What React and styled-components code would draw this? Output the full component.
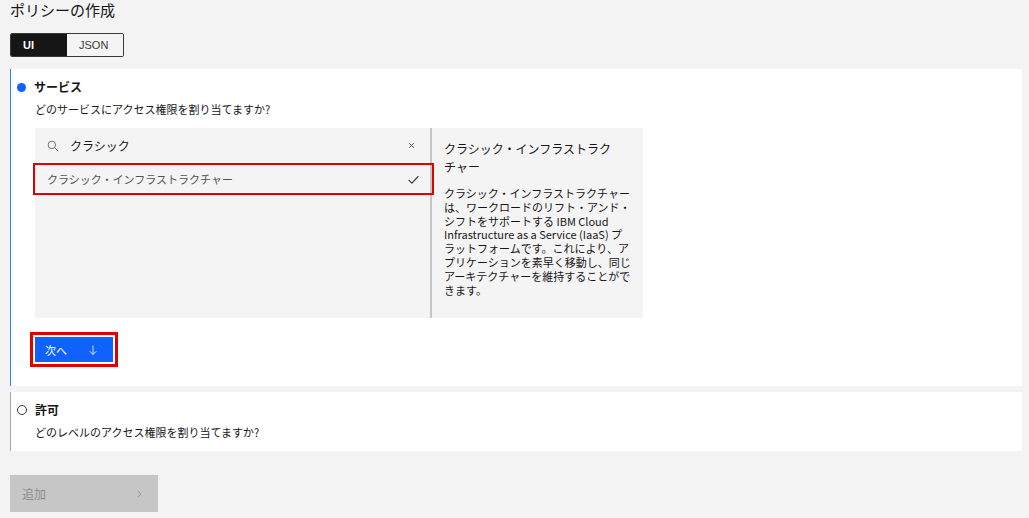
import styled, { createGlobalStyle } from "styled-components";

const GlobalStyle = createGlobalStyle`
  body {
    margin: 0;
    background: #f3f3f3;
    font-family: "Noto Sans CJK JP", "Noto Sans", sans-serif;
    color: #161616;
  }
`;

const Page = styled.div`
  padding: 0 7px 0 10px;
  height: 518px;
  box-sizing: border-box;
  overflow: hidden;
`;

const Title = styled.h1`
  margin: 0;
  font-size: 15px;
  font-weight: 400;
  line-height: 20px;
`;

const Toggle = styled.div`
  display: inline-flex;
  margin-top: 13px;
  border: 1px solid #393939;
  border-radius: 2px;
  overflow: hidden;
`;

const ToggleItem = styled.button`
  width: 56px;
  height: 22px;
  border: none;
  padding: 0 0 0 12px;
  text-align: left;
  font-family: "Liberation Sans", sans-serif;
  font-size: 11px;
  font-weight: ${(p) => (p.$active ? 700 : 400)};
  background: ${(p) => (p.$active ? "#161616" : "#f4f4f4")};
  color: ${(p) => (p.$active ? "#fff" : "#393939")};
`;

const Panel = styled.section`
  background: #fff;
  border-left: ${(p) => (p.$active ? "1px solid #3d7cff" : "1px solid #a8a8a8")};
  padding: ${(p) => p.$pad};
  margin-top: ${(p) => p.$top};
`;

const Heading = styled.div`
  display: flex;
  align-items: center;
  gap: 8px;
  padding-left: 6px;
  font-size: 12px;
  font-weight: 700;
  line-height: 16px;
`;

const Radio = styled.span`
  border-radius: 50%;
  box-sizing: border-box;
  background: ${(p) => (p.$filled ? "#0f62fe" : "#fff")};
  border: ${(p) => (p.$filled ? "none" : "1px solid #393939")};
  width: ${(p) => (p.$filled ? "9px" : "10px")};
  height: ${(p) => (p.$filled ? "9px" : "10px")};
`;

const Sub = styled.p`
  margin: 6px 0 0 24px;
  font-size: 11px;
  line-height: 16px;
`;

const Picker = styled.div`
  display: flex;
  margin: 11px 0 0 24px;
  width: 608px;
  height: 190px;
  background: #f4f4f4;
`;

const ListCol = styled.div`
  width: 395px;
  border-right: 2px solid #c6c6c6;
`;

const SearchRow = styled.div`
  display: flex;
  align-items: center;
  height: 35px;
  padding: 0 14px 0 12px;
  font-size: 12px;
  color: #161616;
`;

const SearchText = styled.span`
  flex: 1;
  margin-left: 11px;
`;

const Item = styled.div`
  display: flex;
  align-items: center;
  justify-content: space-between;
  box-sizing: border-box;
  width: 401px;
  height: 32px;
  margin-left: -2px;
  padding: 0 12px 0 12px;
  font-size: 11px;
  color: #525252;
  border: 2px solid #e00000;
`;

const DescCol = styled.div`
  flex: 1;
  padding: 12px 12px;
`;

const DescTitle = styled.div`
  max-width: 176px;
  font-size: 12px;
  line-height: 18px;
`;

const DescBody = styled.div`
  margin-top: 11px;
  font-size: 11px;
  line-height: 13.8px;
`;

const Highlight = styled.div`
  display: inline-block;
  margin: 14px 0 0 19px;
  padding: 2px;
  border: 3px solid #e00000;
`;

const PrimaryButton = styled.button`
  display: flex;
  align-items: center;
  justify-content: space-between;
  width: 78px;
  height: 25px;
  padding: 0 14px 0 10px;
  border: none;
  background: #0f62fe;
  color: #fff;
  font-family: inherit;
  font-size: 11px;
`;

const AddButton = styled.button`
  display: flex;
  align-items: center;
  justify-content: space-between;
  margin-top: 24px;
  width: 148px;
  height: 37px;
  padding: 0 14px 0 12px;
  border: none;
  background: #c6c6c6;
  color: #8d8d8d;
  font-family: inherit;
  font-size: 12px;
`;

const Icon = ({ d, size = 12, stroke = "#161616", w = 1.2 }) => (
  <svg width={size} height={size} viewBox="0 0 16 16" fill="none" stroke={stroke} strokeWidth={w}>
    <path d={d} />
  </svg>
);

export default function App() {
  return (
    <Page>
      <GlobalStyle />
      <Title>ポリシーの作成</Title>
      <Toggle>
        <ToggleItem $active>UI</ToggleItem>
        <ToggleItem>JSON</ToggleItem>
      </Toggle>

      <Panel $active $top="12px" $pad="10px 0 19px 0">
        <Heading>
          <Radio $filled />
          サービス
        </Heading>
        <Sub>どのサービスにアクセス権限を割り当てますか?</Sub>
        <Picker>
          <ListCol>
            <SearchRow>
              <svg width="12" height="12" viewBox="0 0 16 16" fill="none" stroke="#6f6f6f" strokeWidth="1.3">
                <circle cx="6.5" cy="6.5" r="5" />
                <path d="M10.2 10.2 15 15" />
              </svg>
              <SearchText>クラシック</SearchText>
              <Icon d="M4 4l8 8M12 4l-8 8" size={9} stroke="#393939" w={1.6} />
            </SearchRow>
            <Item>
              クラシック・インフラストラクチャー
              <Icon d="M2 8.5l4 4 8-8.5" size={13} stroke="#393939" w={1.4} />
            </Item>
          </ListCol>
          <DescCol>
            <DescTitle>クラシック・インフラストラクチャー</DescTitle>
            <DescBody>
              クラシック・インフラストラクチャーは、ワークロードのリフト・アンド・シフトをサポートする IBM Cloud
              Infrastructure as a Service (IaaS) プラットフォームです。これにより、アプリケーションを素早く移動し、同じアーキテクチャーを維持することができます。
            </DescBody>
          </DescCol>
        </Picker>
        <Highlight>
          <PrimaryButton>
            次へ
            <Icon d="M8 2v12M3.5 9.5 8 14l4.5-4.5" size={12} stroke="#fff" w={1.1} />
          </PrimaryButton>
        </Highlight>
      </Panel>

      <Panel $top="6px" $pad="10px 0 11px 0">
        <Heading>
          <Radio />
          許可
        </Heading>
        <Sub>どのレベルのアクセス権限を割り当てますか?</Sub>
      </Panel>

      <AddButton>
        追加
        <Icon d="M6 3l5 5-5 5" size={10} stroke="#8d8d8d" w={1.3} />
      </AddButton>
    </Page>
  );
}
